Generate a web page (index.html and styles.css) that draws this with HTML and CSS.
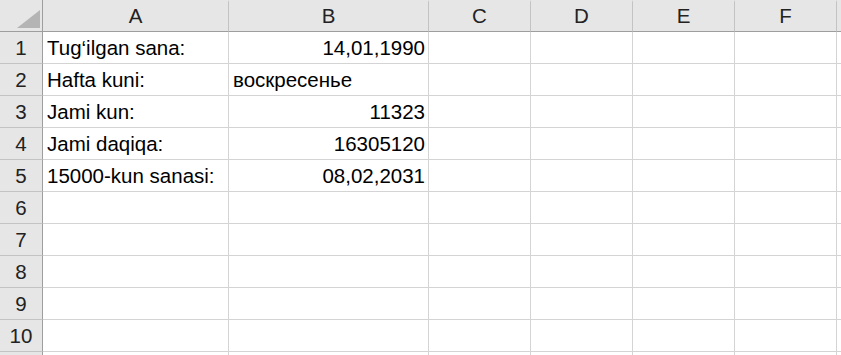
FILE: index.html
```html
<!DOCTYPE html>
<html lang="en">
<head>
    <meta charset="UTF-8">
    <title>Sheet1</title>
    <link rel="stylesheet" href="styles.css">
</head>
<body>
    <div class="sheet">
        <div class="corner"><span class="tri"></span></div>
        <div class="colhead">A</div>
        <div class="colhead">B</div>
        <div class="colhead">C</div>
        <div class="colhead">D</div>
        <div class="colhead">E</div>
        <div class="colhead">F</div>
        <div class="colhead rest"></div>

        <div class="rowhead">1</div>
        <div class="cell">Tug‘ilgan sana:</div>
        <div class="cell num">14,01,1990</div>
        <div class="cell"></div><div class="cell"></div><div class="cell"></div><div class="cell"></div><div class="cell rest"></div>

        <div class="rowhead">2</div>
        <div class="cell">Hafta kuni:</div>
        <div class="cell">воскресенье</div>
        <div class="cell"></div><div class="cell"></div><div class="cell"></div><div class="cell"></div><div class="cell rest"></div>

        <div class="rowhead">3</div>
        <div class="cell">Jami kun:</div>
        <div class="cell num">11323</div>
        <div class="cell"></div><div class="cell"></div><div class="cell"></div><div class="cell"></div><div class="cell rest"></div>

        <div class="rowhead">4</div>
        <div class="cell">Jami daqiqa:</div>
        <div class="cell num">16305120</div>
        <div class="cell"></div><div class="cell"></div><div class="cell"></div><div class="cell"></div><div class="cell rest"></div>

        <div class="rowhead">5</div>
        <div class="cell">15000-kun sanasi:</div>
        <div class="cell num">08,02,2031</div>
        <div class="cell"></div><div class="cell"></div><div class="cell"></div><div class="cell"></div><div class="cell rest"></div>

        <div class="rowhead">6</div>
        <div class="cell"></div><div class="cell"></div><div class="cell"></div><div class="cell"></div><div class="cell"></div><div class="cell"></div><div class="cell rest"></div>

        <div class="rowhead">7</div>
        <div class="cell"></div><div class="cell"></div><div class="cell"></div><div class="cell"></div><div class="cell"></div><div class="cell"></div><div class="cell rest"></div>

        <div class="rowhead">8</div>
        <div class="cell"></div><div class="cell"></div><div class="cell"></div><div class="cell"></div><div class="cell"></div><div class="cell"></div><div class="cell rest"></div>

        <div class="rowhead">9</div>
        <div class="cell"></div><div class="cell"></div><div class="cell"></div><div class="cell"></div><div class="cell"></div><div class="cell"></div><div class="cell rest"></div>

        <div class="rowhead">10</div>
        <div class="cell"></div><div class="cell"></div><div class="cell"></div><div class="cell"></div><div class="cell"></div><div class="cell"></div><div class="cell rest"></div>

        <div class="rowhead"></div>
        <div class="cell"></div><div class="cell"></div><div class="cell"></div><div class="cell"></div><div class="cell"></div><div class="cell"></div><div class="cell rest"></div>
    </div>
</body>
</html>
```

FILE: styles.css
```css
html, body { margin: 0; padding: 0; background: #fff; }
body { font-family: "Liberation Sans", Arial, sans-serif; font-size: 20.5px; color: #000; }

.sheet {
    display: grid;
    grid-template-columns: 43px 186px 200px 102px 102px 102px 102px 1fr;
    grid-auto-rows: 32px;
    width: 841px;
    height: 355px;
    overflow: hidden;
}

.corner, .colhead, .rowhead, .cell { box-sizing: border-box; }

.corner {
    background: #e6e6e6;
    border-right: 1px solid #9e9e9e;
    border-bottom: 1px solid #9e9e9e;
    position: relative;
}
.corner .tri {
    position: absolute;
    left: 17px;
    top: 10px;
    width: 0;
    height: 0;
    border-left: 23px solid transparent;
    border-bottom: 18px solid #b4b4b4;
}

.colhead {
    background: #e6e6e6;
    border-bottom: 1px solid #9e9e9e;
    border-right: 1px solid #c3c3c3;
    border-top: 2px solid #e6e6e6;
    text-align: center;
    line-height: 28px;
    color: #222;
}
.colhead.rest { border-right: none; }

.rowhead {
    background: #e6e6e6;
    border-right: 1px solid #9e9e9e;
    border-bottom: 1px solid #c3c3c3;
    text-align: center;
    line-height: 32px;
    color: #222;
}

.cell {
    border-right: 1px solid #d4d4d4;
    border-bottom: 1px solid #d4d4d4;
    padding: 0 3px 0 4px;
    line-height: 32px;
    white-space: nowrap;
    overflow: hidden;
}
.cell.num { text-align: right; }
.cell.rest { border-right: none; }
```
